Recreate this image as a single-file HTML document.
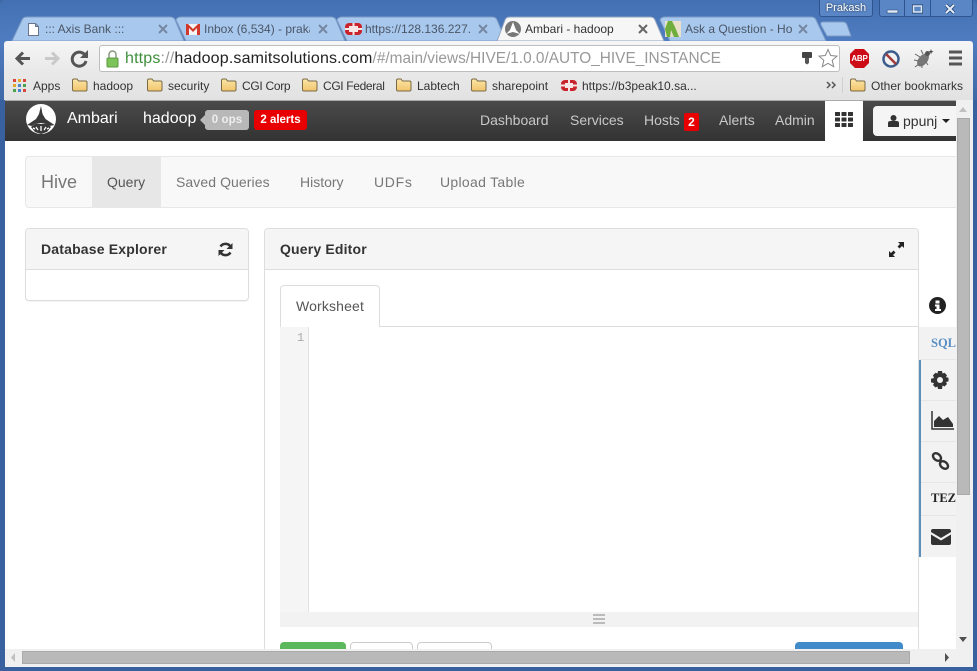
<!DOCTYPE html>
<html><head><meta charset="utf-8">
<style>
html,body{margin:0;padding:0;width:977px;height:671px;overflow:hidden;background:#3f68a6}
*{box-sizing:border-box}
body{font-family:"Liberation Sans",sans-serif;position:relative}
.a{position:absolute;white-space:nowrap}
svg{position:absolute;overflow:visible}
.tl{font-size:12px;color:#4a5666;top:22px;line-height:14px}
.bm{font-size:12px;color:#333;top:79px;line-height:14px}
.nav{font-size:14px;color:#c8c8c8;top:110px;line-height:20px}
.sub{font-size:14px;color:#777;top:172px;line-height:20px}
.rule{position:absolute;left:920px;width:36px;height:1px;background:#e6e6e6}
.bl{position:absolute;left:919px;width:2px;background:#5b8fbc}
</style></head><body>
<!-- window frame -->
<div class="a" style="left:0;top:0;width:977px;height:671px;background:linear-gradient(#4370b2 0,#4f7cc0 40px,#3f68a6 100px);border-radius:6px 6px 0 0"></div>
<div class="a" style="left:0;top:100px;width:977px;height:571px;background:#3a619f"></div>
<!-- tabs -->
<svg style="left:0;top:0" width="977" height="42">
<path d="M12 41 L22 20 Q23 17 27 17 L170 17 Q174 17 175 20 L184 41Z" fill="#a9c8ee" stroke="#7c9cc6"/>
<path d="M176 20 Q177 17 181 17 L331 17 Q335 17 336 20 L345 41 L186 41Z" fill="#a9c8ee" stroke="#7c9cc6"/>
<path d="M337 20 Q338 17 342 17 L492 17 Q496 17 497 20 L506 41 L347 41Z" fill="#a9c8ee" stroke="#7c9cc6"/>
<path d="M660 20 Q661 17 665 17 L811 17 Q815 17 816 20 L826 41 L670 41Z" fill="#a9c8ee" stroke="#7c9cc6"/>
<path d="M497 41 L505 20 Q506 17 510 17 L650 17 Q654 17 655 20 L664 41Z" fill="#f6f6f6" stroke="#8fa4c0"/>
<path d="M821 25 Q820 22 823 22 L843 22 Q846 22 847 25 L851 36 L827 36Z" fill="#a9c8ee" stroke="#7c9cc6"/>
<!-- favicons -->
<path d="M28.500 23.500h7l3 3v9h-10z M35.500 23.500v3h3" fill="#fff" stroke="#6a7688"/>
<rect x="186" y="24" width="14" height="11" fill="#f4f4f4"/>
<path d="M186 24v11h3v-7l4 4 4-4v7h3V24h-2l-5 5-5-5z" fill="#d2392c"/>
<rect x="345" y="23" width="17" height="12" rx="4" fill="#c9242b"/>
<path d="M349 26h9v6h-9z M345 28h17v2h-17z M352.500 23h2v12h-2z" fill="#f6e6e6"/>
<circle cx="513" cy="29" r="8" fill="#777"/>
<path d="M513 22l3 8 4 4-7-2-7 2 4-4z" fill="#fff"/>
<rect x="665" y="21" width="16" height="16" fill="#e8e0c8"/>
<path d="M668 21h4l3 6 4 10h-5l-3-7-1 7h-3l-2-8z" fill="#6fae3c"/>
</svg>
<div class="a tl" style="left:45px">::: Axis Bank :::</div>
<div class="a tl" style="left:204px;width:106px;overflow:hidden">Inbox (6,534) - prakash</div>
<div class="a tl" style="left:365px;width:106px;overflow:hidden">https://128.136.227.</div>
<div class="a tl" style="left:525px;color:#333">Ambari - hadoop</div>
<div class="a tl" style="left:685px;width:108px;overflow:hidden">Ask a Question - Hortonworks</div>
<svg style="left:0;top:0" width="977" height="42" fill="none" stroke-width="2">
<path d="M159 25l8 8m0-8l-8 8M319 25l8 8m0-8l-8 8M479 25l8 8m0-8l-8 8M799 25l8 8m0-8l-8 8" stroke="#7488a2"/>
<path d="M639 25l8 8m0-8l-8 8" stroke="#666"/>
</svg>
<!-- window controls -->
<div class="a" style="left:819px;top:0;width:54px;height:17px;background:#5a86c6;border:1px solid #2f5590;border-top:0;border-radius:0 0 3px 3px;color:#fff;font-size:11px;line-height:17px;text-align:center;text-shadow:0 0 2px #234">Prakash</div>
<div class="a" style="left:879px;top:0;width:94px;height:17px;background:#5a86c6;border:1px solid #2f5590;border-top:0;border-radius:0 0 3px 3px"></div>
<svg style="left:879px;top:0" width="94" height="17" fill="none">
<path d="M25.500 0v17M51.500 0v17" stroke="#2f5590"/>
<rect x="8" y="10" width="11" height="3" rx="1" fill="#dfe9f6" stroke="#23436f" stroke-width=".6"/>
<rect x="33.500" y="5" width="10" height="8" fill="none" stroke="#23436f" stroke-width="1"/>
<rect x="34.500" y="6" width="8" height="6" fill="none" stroke="#dfe9f6" stroke-width="1.500"/>
<path d="M67 5l8 8m0-8l-8 8" stroke="#23436f" stroke-width="3.500"/>
<path d="M67 5l8 8m0-8l-8 8" stroke="#e4edf8" stroke-width="2"/>
</svg>
<!-- toolbar -->
<div class="a" style="left:4px;top:41px;width:969px;height:59px;background:linear-gradient(#f6f6f6,#e9e9e9 30px,#e2e2e2);border-radius:3px 3px 0 0"></div>
<div class="a" style="left:99px;top:45px;width:741px;height:27px;background:#fff;border:1px solid #bdbdbd;border-radius:3px"></div>
<svg style="left:0;top:41px" width="977" height="59">
<path d="M30 17.500H18M23 11.500l-6 6 6 6" fill="none" stroke="#555" stroke-width="3"/>
<path d="M45 17.500h12M52 11.500l6 6-6 6" fill="none" stroke="#c9c9c9" stroke-width="3"/>
<path d="M85.500 15a7 7 0 1 0 .5 5" fill="none" stroke="#555" stroke-width="3"/>
<path d="M88 9v8h-8z" fill="#555"/>
<rect x="107" y="17" width="11" height="9" rx="1" fill="#7cc35a" stroke="#5a9a3e"/>
<path d="M109 17v-3.500a3.500 3.500 0 0 1 7 0v3.500" fill="none" stroke="#8a9a80" stroke-width="1.500"/>
<!-- key -->
<rect x="802" y="11" width="10" height="6" rx="1" fill="#444"/><path d="M805 17h4v5l-2 1.500-2-1.500z" fill="#555"/>
<path d="M828 8.500l2.700 6 6.300.6-4.800 4.200 1.500 6.400-5.700-3.400-5.700 3.400 1.500-6.400-4.800-4.200 6.300-.6z" fill="#fff" stroke="#888"/>
<!-- ABP -->
<path d="M855 8h9l5 5v9l-5 5h-9l-5-5v-9z" fill="#cc0b16"/>
<circle cx="891" cy="18" r="7.500" fill="#f2f2f2" stroke="#3b5c8c" stroke-width="2.500"/>
<path d="M886 13l10 10" stroke="#a33a3a" stroke-width="2.500"/>
<!-- bug -->
<ellipse cx="923" cy="19" rx="4.500" ry="7.500" transform="rotate(40 923 19)" fill="#777"/>
<circle cx="927.500" cy="12.500" r="2.500" fill="#555"/>
<path d="M915 13l5 3M914 19l5 1M915 26l4-3M922 27l0-4M928 24l-2-3M921 9l2 4" stroke="#666" fill="none"/>
<path d="M931 8l.7 2 2 .7-2 .7-.7 2-.7-2-2-.7 2-.7z" fill="#444"/>
<path d="M949 11h13M949 17h13M949 23h13" stroke="#555" stroke-width="3"/>
<!-- apps grid -->
<g>
<rect x="13" y="38" width="3" height="3" fill="#d9453a"/><rect x="18" y="38" width="3" height="3" fill="#e2a72e"/><rect x="23" y="38" width="3" height="3" fill="#d9453a"/>
<rect x="13" y="43" width="3" height="3" fill="#e2a72e"/><rect x="18" y="43" width="3" height="3" fill="#4a84c9"/><rect x="23" y="43" width="3" height="3" fill="#4ba34e"/>
<rect x="13" y="48" width="3" height="3" fill="#4ba34e"/><rect x="18" y="48" width="3" height="3" fill="#4a84c9"/><rect x="23" y="48" width="3" height="3" fill="#d9453a"/>
</g>
<defs><linearGradient id="f" x1="0" y1="0" x2="0" y2="1"><stop offset="0" stop-color="#fbe6a8"/><stop offset="1" stop-color="#f2c46c"/></linearGradient>
<g id="fo"><path d="M.5 2.500q0-1.500 1.500-1.500h3l1.500 2h7q1.500 0 1.500 1.500v7q0 1.500-1.500 1.500H2q-1.500 0-1.500-1.500z" fill="url(#f)" stroke="#7a6a45"/></g></defs>
<use href="#fo" x="72" y="37"/><use href="#fo" x="147" y="37"/><use href="#fo" x="221" y="37"/><use href="#fo" x="302" y="37"/><use href="#fo" x="396" y="37"/><use href="#fo" x="471" y="37"/><use href="#fo" x="850" y="37"/>
<rect x="561" y="39" width="16" height="11" rx="4" fill="#c9242b"/>
<path d="M565 42h8v5h-8z M561 43.500h16v2h-16z M568 39h2v11h-2z" fill="#f6e6e6"/>
<path d="M827 41l3 3-3 3M832 41l3 3-3 3" fill="none" stroke="#555" stroke-width="1.500"/>
<path d="M842.500 36v16" stroke="#d0d0d0"/>
</svg>
<div class="a" style="left:125px;top:49px;font-size:16px;line-height:19px;color:#999;letter-spacing:.17px"><span style="color:#3f8f3c">https</span>://<span style="color:#222">hadoop.samitsolutions.com</span><span style="font-size:15.4px;letter-spacing:0">/#/main/views/HIVE/1.0.0/AUTO_HIVE_INSTANCE</span></div>
<div class="a" style="left:850px;top:53px;width:19px;text-align:center;color:#fff;font-size:8px;font-weight:bold;line-height:12px;letter-spacing:-.2px">ABP</div>
<div class="a bm" style="left:33px">Apps</div>
<div class="a bm" style="left:93px">hadoop</div>
<div class="a bm" style="left:168px">security</div>
<div class="a bm" style="left:242px;letter-spacing:-.3px">CGI Corp</div>
<div class="a bm" style="left:323px;letter-spacing:-.35px">CGI Federal</div>
<div class="a bm" style="left:417px">Labtech</div>
<div class="a bm" style="left:492px">sharepoint</div>
<div class="a bm" style="left:582px">https://b3peak10.sa...</div>
<div class="a bm" style="left:871px">Other bookmarks</div>
<!-- page -->
<div class="a" style="left:5px;top:100px;width:951px;height:549px;background:#fff"></div>
<div class="a" style="left:5px;top:100px;width:951px;height:41px;background:linear-gradient(#4a4a4a,#333);border-top:1px solid #aaa"></div>
<svg style="left:25px;top:103px" width="32" height="32">
<circle cx="16" cy="16" r="15" fill="#fff"/>
<path d="M16 3l1.500 8 3 5 9 6-5 1-4-3H11l-4 3-5-1 9-6 3-5z" fill="#3a3a3a"/>
<path d="M6 24l5-4 5 1 5-1 5 4-4 5-6 2-6-2z" fill="#3a3a3a"/>
<path d="M11 24l2 3M21 24l-2 3M16 23v5M8 25l2 1M24 25l-2 1" stroke="#fff" stroke-width="1.300" fill="none"/>
</svg>
<div class="a" style="left:67px;top:109px;font-size:16px;line-height:20px;color:#fff">Ambari</div>
<div class="a" style="left:143px;top:109px;font-size:16px;line-height:20px;color:#fff">hadoop</div>
<svg style="left:200px;top:115px" width="6" height="10"><path d="M5 0L0 5l5 5z" fill="#bbb"/></svg>
<div class="a" style="left:205px;top:110px;width:44px;height:20px;background:#b8b8b8;border-radius:3px;color:#eee;font-size:11.500px;font-weight:bold;line-height:20px;text-align:center;letter-spacing:.1px">0 ops</div>
<div class="a" style="left:254px;top:110px;width:53px;height:20px;background:#e80000;border-radius:3px;color:#fff;font-size:11.500px;font-weight:bold;line-height:20px;text-align:center">2 alerts</div>
<div class="a nav" style="left:480px">Dashboard</div>
<div class="a nav" style="left:570px">Services</div>
<div class="a nav" style="left:644px">Hosts</div>
<div class="a" style="left:684px;top:113px;width:15px;height:18px;background:#e80000;border-radius:2px;color:#fff;font-size:12px;font-weight:bold;line-height:18px;text-align:center">2</div>
<div class="a nav" style="left:719px">Alerts</div>
<div class="a nav" style="left:775px">Admin</div>
<div class="a" style="left:825px;top:101px;width:38px;height:41px;background:#fff"></div>
<svg style="left:835px;top:112px" width="18" height="16" fill="#333">
<rect width="5" height="4" rx=".5"/><rect x="6.500" width="5" height="4" rx=".5"/><rect x="13" width="5" height="4" rx=".5"/>
<rect y="5.500" width="5" height="4" rx=".5"/><rect x="6.500" y="5.500" width="5" height="4" rx=".5"/><rect x="13" y="5.500" width="5" height="4" rx=".5"/>
<rect y="11" width="5" height="4" rx=".5"/><rect x="6.500" y="11" width="5" height="4" rx=".5"/><rect x="13" y="11" width="5" height="4" rx=".5"/>
</svg>
<div class="a" style="left:873px;top:106px;width:90px;height:30px;background:#f5f5f5;border-radius:4px"></div>
<svg style="left:888px;top:115px" width="11" height="12" fill="#333"><circle cx="5.500" cy="3" r="3"/><path d="M0 12V8q0-2 2.500-2h6q2.500 0 2.500 2v4z"/></svg>
<div class="a" style="left:903px;top:112px;font-size:14px;line-height:18px;color:#333">ppunj</div>
<svg style="left:942px;top:119px" width="8" height="5"><path d="M0 0h8L4 4z" fill="#222"/></svg>
<!-- sub nav -->
<div class="a" style="left:25px;top:156px;width:931px;height:52px;background:#f8f8f8;border:1px solid #e7e7e7;border-right:0;border-radius:4px 0 0 4px"></div>
<div class="a" style="left:92px;top:157px;width:69px;height:50px;background:#e7e7e7"></div>
<div class="a" style="left:41px;top:170px;font-size:18px;line-height:24px;color:#777">Hive</div>
<div class="a sub" style="left:107px;color:#555">Query</div>
<div class="a sub" style="left:176px;letter-spacing:.08px">Saved Queries</div>
<div class="a sub" style="left:300px">History</div>
<div class="a sub" style="left:374px;letter-spacing:.7px">UDFs</div>
<div class="a sub" style="left:440px;letter-spacing:.3px">Upload Table</div>
<!-- database explorer -->
<div class="a" style="left:25px;top:228px;width:224px;height:73px;background:#fff;border:1px solid #ddd;border-radius:4px;box-shadow:0 1px 1px rgba(0,0,0,.05)"></div>
<div class="a" style="left:26px;top:229px;width:222px;height:41px;background:#f5f5f5;border-bottom:1px solid #ddd;border-radius:3px 3px 0 0"></div>
<div class="a" style="left:41px;top:240px;font-size:14px;font-weight:bold;line-height:18px;color:#333;letter-spacing:.18px">Database Explorer</div>
<svg style="left:218px;top:242px" width="15" height="15" fill="none">
<path d="M13 5.500A6 6 0 0 0 2.500 4.500M2 9.500A6 6 0 0 0 12.500 10.500" stroke="#333" stroke-width="2.500"/>
<path d="M14.500 1v6h-6zM.5 14V8h6z" fill="#333"/>
</svg>
<!-- query editor -->
<div class="a" style="left:264px;top:228px;width:655px;height:440px;background:#fff;border:1px solid #ddd;border-radius:4px 4px 0 0"></div>
<div class="a" style="left:265px;top:229px;width:653px;height:41px;background:#f5f5f5;border-bottom:1px solid #ddd;border-radius:3px 3px 0 0"></div>
<div class="a" style="left:280px;top:240px;font-size:14px;font-weight:bold;line-height:18px;color:#333;letter-spacing:.17px">Query Editor</div>
<svg style="left:889px;top:242px" width="15" height="15" fill="#222">
<path d="M9 0h6v6l-2-2-2.500 2.500-2-2L11 2zM0 9l2 2 2.500-2.500 2 2L4 13l2 2H0z"/>
</svg>
<div class="a" style="left:280px;top:326px;width:639px;height:1px;background:#ddd"></div>
<div class="a" style="left:280px;top:285px;width:100px;height:42px;background:#fff;border:1px solid #ddd;border-bottom:0;border-radius:4px 4px 0 0"></div>
<div class="a" style="left:296px;top:297px;font-size:14px;line-height:18px;color:#555;letter-spacing:.15px">Worksheet</div>
<div class="a" style="left:280px;top:327px;width:29px;height:285px;background:#f5f5f5;border-right:1px solid #e3e3e3"></div>
<div class="a" style="left:297px;top:331px;font-size:12px;line-height:14px;color:#aaa;font-family:'Liberation Mono',monospace">1</div>
<div class="a" style="left:280px;top:612px;width:638px;height:15px;background:#f2f2f2"></div>
<svg style="left:593px;top:614px" width="12" height="10" fill="#bbb"><rect width="12" height="2"/><rect y="4" width="12" height="2"/><rect y="8" width="12" height="2"/></svg>
<div class="a" style="left:280px;top:642px;width:66px;height:10px;background:#5cb85c;border-radius:4px 4px 0 0"></div>
<div class="a" style="left:350px;top:642px;width:63px;height:10px;background:#fff;border:1px solid #ccc;border-radius:4px 4px 0 0"></div>
<div class="a" style="left:417px;top:642px;width:75px;height:10px;background:#fff;border:1px solid #ccc;border-radius:4px 4px 0 0"></div>
<div class="a" style="left:795px;top:642px;width:108px;height:10px;background:#428bca;border-radius:4px 4px 0 0"></div>
<!-- side toolbar -->
<div class="a" style="left:919px;top:327px;width:37px;height:230px;background:#f2f2f2"></div>
<div class="rule" style="top:359px"></div><div class="rule" style="top:400px"></div><div class="rule" style="top:441px"></div><div class="rule" style="top:482px"></div><div class="rule" style="top:515px"></div>
<div class="bl" style="top:360px;height:197px"></div>
<svg style="left:929px;top:297px" width="17" height="17"><circle cx="8.500" cy="8.500" r="8.500" fill="#222"/><path d="M6.500 3.500h4v3h-4zM6 7.500h4.500v4.500h1.500v2H6v-2h1.500V9.500H6z" fill="#fff"/></svg>
<div class="a" style="left:931px;top:336px;font-family:'Liberation Serif',serif;font-size:12.500px;font-weight:bold;line-height:14px;color:#5b8fc4">SQL</div>
<svg style="left:931px;top:371px" width="18" height="18" fill="#333"><path d="M7 0h4l.5 2.500 2-.8 2.500 2.500-1 2 2.500.6v3.600l-2.500.6 1 2-2.500 2.500-2-1L11 18H7l-.5-2.500-2 1L2 14l1-2-3-.6V7.700L3 7 2 4.200 4.500 1.700l2 .8z"/><circle cx="9" cy="9" r="3" fill="#f2f2f2"/></svg>
<svg style="left:931px;top:411px" width="23" height="19"><path d="M1 0v18h22" fill="none" stroke="#333" stroke-width="1.500"/><path d="M3 16V10l5-5 4 4 5-3 5 7v3z" fill="#333"/></svg>
<svg style="left:931px;top:451px" width="19" height="20" fill="none" stroke="#333" stroke-width="2.400"><ellipse cx="6" cy="6" rx="4.500" ry="3.200" transform="rotate(40 6 6)"/><ellipse cx="13" cy="14" rx="4.500" ry="3.200" transform="rotate(40 13 14)"/></svg>
<div class="a" style="left:931px;top:491px;font-family:'Liberation Serif',serif;font-size:12.500px;font-weight:bold;line-height:14px;color:#222">TEZ</div>
<svg style="left:931px;top:529px" width="20" height="16"><path d="M0 2q0-2 2-2h16q2 0 2 2v1l-10 6L0 3z M0 5.500l10 6 10-6V14q0 2-2 2H2q-2 0-2-2z" fill="#333"/></svg>
<!-- v scrollbar -->
<div class="a" style="left:956px;top:100px;width:17px;height:549px;background:#f0f0f0"></div>
<div class="a" style="left:957px;top:118px;width:13px;height:377px;background:#b9b9b9;border:1px solid #aaa"></div>
<svg style="left:958px;top:106px" width="12" height="8"><path d="M1 6h8L5 1z" fill="#c0c0c0"/></svg>
<svg style="left:958px;top:636px" width="12" height="8"><path d="M1 1h8L5 6z" fill="#505050"/></svg>
<!-- h scrollbar -->
<div class="a" style="left:5px;top:649px;width:968px;height:18px;background:#f0f0f0"></div>
<div class="a" style="left:22px;top:651px;width:888px;height:13px;background:#b9b9b9;border:1px solid #aaa"></div>
<svg style="left:9px;top:651px" width="8" height="13"><path d="M6 2v9L2 6.500z" fill="#c0c0c0"/></svg>
<svg style="left:944px;top:651px" width="8" height="13"><path d="M1 2v9l4-4.500z" fill="#505050"/></svg>
<div class="a" style="left:0;top:667px;width:977px;height:4px;background:#3a619f"></div>
</body></html>
